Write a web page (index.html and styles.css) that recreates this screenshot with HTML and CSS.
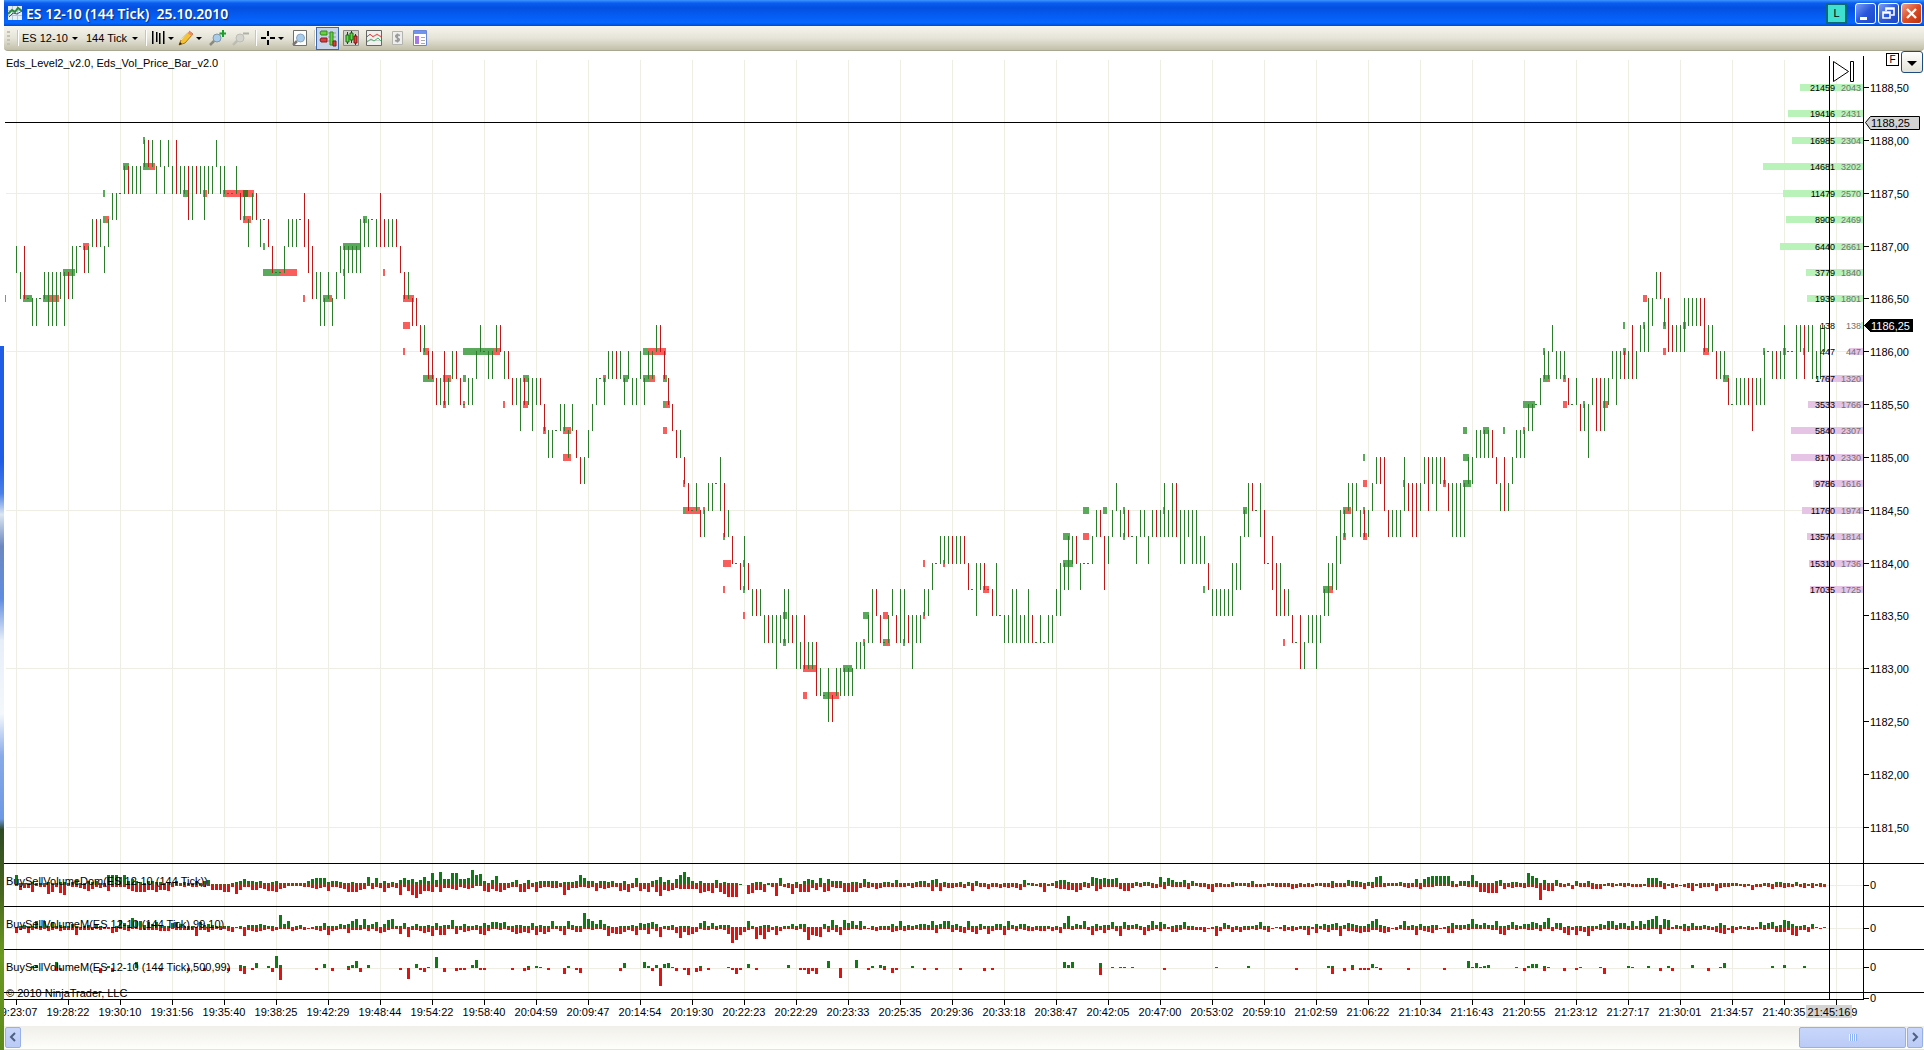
FILE: index.html
```html
<!DOCTYPE html>
<html lang="en">
<head>
    <meta charset="UTF-8">
    <meta name="viewport" content="width=device-width, initial-scale=1.0">
    <title>ES 12-10 (144 Tick) 25.10.2010</title>
    <link rel="stylesheet" href="styles.css">
</head>
<body>
    <div class="desktop"></div>
    <main class="window">
        <header class="titlebar">
            <svg class="title-icon" width="14" height="14" viewBox="0 0 14 14">
                <rect width="14" height="14" fill="#e4eef4"/>
                <path d="M0 4.5h14M0 9.5h14M4.5 0v14M9.5 0v14" stroke="#b4c4d0"/>
                <path d="M0 8l4-4 3 2 3-4 4 3" fill="none" stroke="#2a8a3a" stroke-width="2"/>
                <path d="M1 11l4-4 4 1 5-3" fill="none" stroke="#3050a0"/>
            </svg>
            <h1>ES 12-10 (144 Tick)&nbsp; 25.10.2010</h1>
            <button type="button" class="link-btn">L</button>
            <button type="button" class="win-btn" aria-label="Minimize">
                <svg width="20" height="20"><path d="M4 13h7v3H4z" fill="#fff"/></svg>
            </button>
            <button type="button" class="win-btn" aria-label="Restore">
                <svg width="20" height="20"><path d="M7 7V4h8v7h-3M7 5h8" fill="none" stroke="#fff" stroke-width="1.6"/><path d="M4 8h7v6H4zM4 9h7" fill="none" stroke="#fff" stroke-width="1.6"/></svg>
            </button>
            <button type="button" class="win-btn close" aria-label="Close">
                <svg width="20" height="20"><path d="M5 5l9 9M14 5l-9 9" stroke="#fff" stroke-width="2.4"/></svg>
            </button>
        </header>

        <nav class="toolbar">
            <span class="grip"></span>
            <span class="sep"></span>
            <label class="picker instrument"><select aria-label="Instrument"><option>ES 12-10</option></select><i class="caret"></i></label>
            <label class="picker period"><select aria-label="Period"><option>144 Tick</option></select><i class="caret"></i></label>
            <span class="sep"></span>
            <button type="button" class="tool drop" aria-label="Chart style">
                <svg width="16" height="16"><path d="M2 1h1.500v13H2zM6 2h1.500v10H6zM9 3h1.500v11H9zM13 1h1.500v13H13z"/></svg><i class="caret"></i>
            </button>
            <button type="button" class="tool drop" aria-label="Drawing tools">
                <svg width="16" height="16"><path d="M1 15l2-5 8-9 4 3-8 9z" fill="#f6c233" stroke="#a8761c"/><path d="M11 1l4 3-1.500 2-4-3z" fill="#e88a70"/><path d="M3 10l8-9" stroke="#fff0a0"/><path d="M1 15l1-3 2 2z" fill="#222"/></svg><i class="caret"></i>
            </button>
            <button type="button" class="tool" aria-label="Zoom in">
                <svg width="17" height="16"><path d="M1 15l5-5" stroke="#8a8a80" stroke-width="2.500"/><circle cx="8" cy="8" r="4" fill="#a8cdec" stroke="#8296a8"/><path d="M14 0v7M10.500 3.500h7" stroke="#17a02c" stroke-width="2"/></svg>
            </button>
            <button type="button" class="tool" aria-label="Zoom out">
                <svg width="17" height="16"><path d="M1 15l5-5" stroke="#bdbdb4" stroke-width="2.500"/><circle cx="8" cy="8" r="4" fill="#d4d4ce" stroke="#bdbdb4"/><path d="M11 3.500h6" stroke="#b0b0a8" stroke-width="2"/></svg>
            </button>
            <span class="sep"></span>
            <button type="button" class="tool drop" aria-label="Crosshair">
                <svg width="16" height="16"><path d="M8 1v5M8 10v5M1 8h5M10 8h5" stroke="#000" stroke-width="2"/></svg><i class="caret"></i>
            </button>
            <button type="button" class="tool" aria-label="Zoom window">
                <svg width="16" height="16"><path d="M1.500.5h13v15h-13z" fill="#fff" stroke="#70706c"/><path d="M1 15l4-4" stroke="#777" stroke-width="2.500"/><circle cx="8.500" cy="8" r="4" fill="#a8cdec" stroke="#8aa4bc"/></svg>
            </button>
            <span class="sep"></span>
            <button type="button" class="tool pressed" aria-label="Chart trader">
                <svg width="18" height="18"><path d="M9 4h8M9 8h8M9 12h8" stroke="#999"/><path d="M2 2h6v4H2L1 4zM11 3h3v13h-3z" fill="#6ad03c" stroke="#2c8a1c"/><path d="M2 9h6v4H2l-1-2zM14 12h3v5h-3z" fill="#d84040" stroke="#8c1c1c"/></svg>
            </button>
            <button type="button" class="tool" aria-label="Bars">
                <svg width="16" height="16"><path d="M.5.5h15v15H.5z" fill="#d4d4cc" stroke="#888"/><path d="M4.500 2v12M8.500 1v12M12.500 4v11" stroke="#333"/><path d="M3 5h3v7H3zM7 3h3v7H7z" fill="#58e03c" stroke="#186818"/><path d="M11 6h3v7h-3z" fill="#e84040" stroke="#801010"/></svg>
            </button>
            <button type="button" class="tool" aria-label="Indicators">
                <svg width="16" height="16"><path d="M.5.5h15v15H.5z" fill="#f0f0ee" stroke="#666"/><path d="M1 5.500h14M1 10.500h14" stroke="#ccc"/><path d="M1 7l3-3 3 3 4-3 4 3" fill="none" stroke="#e05050"/><path d="M1 12l4-3 3 2 4-3 3 3" fill="none" stroke="#50b070"/></svg>
            </button>
            <button type="button" class="tool" aria-label="Strategies" disabled>
                <svg width="16" height="16"><path d="M3.500 1.500h10v13h-10z" fill="#eee" stroke="#b4b4ae"/><path d="M11 5.500c-4-2-6 1-2.500 2.500s1.500 4-2.500 2.500M8.500 3.500v9" fill="none" stroke="#999" stroke-width="1.500"/></svg>
            </button>
            <button type="button" class="tool" aria-label="Properties">
                <svg width="16" height="16"><path d="M1.500.5h13v15h-13z" fill="#fff" stroke="#6a86d8"/><path d="M2 1h12v3H2z" fill="#6f93ee"/><path d="M3 6h4v8H3z" fill="#a678e8"/><path d="M9 7.500h4M9 10.500h4M9 13.500h4" stroke="#aaa"/></svg>
            </button>
        </nav>

        <section class="chart">
            <div class="pane price-pane">
                <svg class="plot" id="price"></svg>
                <svg class="axis" id="priceAxis"></svg>
                <p class="pane-label">Eds_Level2_v2.0, Eds_Vol_Price_Bar_v2.0</p>
                <div class="axis-tools">
                    <button type="button" class="fix-btn">F</button>
                    <button type="button" class="more-btn" aria-label="Chart menu"><i class="caret"></i></button>
                </div>
            </div>
            <div class="pane">
                <svg class="plot" id="dom"></svg>
                <svg class="axis"><path d="M0 21.500h5" stroke="#000"/><text x="6" y="25">0</text></svg>
                <p class="pane-label">BuySellVolumeDom(ES 12-10 (144 Tick))</p>
            </div>
            <div class="pane">
                <svg class="plot" id="small"></svg>
                <svg class="axis"><path d="M0 21.500h5" stroke="#000"/><text x="6" y="25">0</text></svg>
                <p class="pane-label">BuySellVolumeM(ES 12-10 (144 Tick),99,10)</p>
            </div>
            <div class="pane">
                <svg class="plot" id="large"></svg>
                <svg class="axis"><path d="M0 17.500h5" stroke="#000"/><text x="6" y="21">0</text></svg>
                <p class="pane-label">BuySellVolumeM(ES 12-10 (144 Tick),500,99)</p>
            </div>
            <div class="pane stub">
                <svg class="plot" id="stub"></svg>
                <svg class="axis"><path d="M0 5.500h5" stroke="#000"/><text x="6" y="9">0</text></svg>
                <p class="pane-label">© 2010 NinjaTrader, LLC</p>
            </div>
            <svg class="times" id="times"></svg>
            <div class="cursor-x"></div>
            <div class="cursor-y"></div>
        </section>

        <footer class="scrollbar">
            <button type="button" class="scroll-btn" aria-label="Scroll left"><svg width="8" height="10"><path d="M6 1L2 5l4 4" fill="none" stroke="#4d6185" stroke-width="2"/></svg></button>
            <div class="track"><div class="thumb"><i></i></div></div>
            <button type="button" class="scroll-btn" aria-label="Scroll right"><svg width="8" height="10"><path d="M2 1l4 4-4 4" fill="none" stroke="#4d6185" stroke-width="2"/></svg></button>
        </footer>
    </main>
    <script src="chart.js"></script>
</body>
</html>
```
FILE: styles.css
```css
* {
    box-sizing: border-box;
}
body {
    margin: 0;
    height: 100vh;
    display: flex;
    overflow: hidden;
    background: #fff;
    font-family: "Liberation Sans", Arial, sans-serif;
    font-size: 11px;
    color: #000;
}
button, select {
    font: inherit;
    color: inherit;
    padding: 0;
    border: 0;
    background: none;
}
h1, p {
    margin: 0;
}
.desktop {
    width: 4px;
    background: linear-gradient(#fff 0 33%, #1f5de6 33% 44%, #4a80e8 47%, #dce6f2 49%, #6c88c0 52%, #5f8ce0 57%, #e6eef8 61%, #f4f8fc 68%, #88aae8 72%, #6c98e4 78%, #2e4a24 79%, #47661e 85%, #6a9a20 91%, #5c8a1c);
}
.window {
    flex: 1;
    min-width: 0;
    display: flex;
    flex-direction: column;
}

/* title bar */
.titlebar {
    height: 26px;
    display: flex;
    align-items: center;
    gap: 2px;
    padding: 0 2px 0 4px;
    background: linear-gradient(#3c94ff 0, #0a5cf0 12%, #0450e0 30%, #0560f8 70%, #0468ff 88%, #0048d0);
}
.titlebar h1 {
    flex: 1;
    margin-left: 2px;
    font-family: "Noto Sans", sans-serif;
    font-size: 14px;
    font-weight: 600;
    color: #fff;
    text-shadow: 1px 1px 1px #0a2a80;
}
.link-btn {
    width: 21px;
    height: 21px;
    margin-right: 6px;
    background: #40e0d0;
    border: 2px solid #0c6a78;
}
.win-btn {
    width: 21px;
    height: 21px;
    border: 1px solid #fff;
    border-radius: 3px;
    background: linear-gradient(135deg, #7ca0f4, #2a58dc 50%, #1c48c8);
}
.win-btn svg {
    display: block;
    width: 19px;
    height: 19px;
}
.win-btn.close {
    background: linear-gradient(135deg, #f0a088, #dc4c24 50%, #b83410);
}

/* toolbar */
.toolbar {
    height: 25px;
    display: flex;
    align-items: center;
    padding-left: 3px;
    background: linear-gradient(#f6f5ee, #e6e4d8 50%, #c2c0a8);
    border-bottom: 1px solid #a9a791;
    border-radius: 0 0 4px 4px;
}
.grip {
    width: 3px;
    height: 14px;
    margin-right: 4px;
    background: repeating-linear-gradient(#c4c2b2 0 2px, transparent 2px 4px);
}
.sep {
    width: 1px;
    height: 16px;
    margin: 0 3px;
    background: #fff;
    border-left: 1px solid #c8c6b6;
    box-sizing: content-box;
}
.picker {
    display: flex;
    align-items: center;
    margin-right: 8px;
}
.picker select {
    appearance: none;
    width: 50px;
}
.picker.period {
    margin-right: 4px;
}
.picker.period select {
    width: 46px;
}
.caret {
    display: inline-block;
    width: 0;
    height: 0;
    border: 3px solid transparent;
    border-top-color: #000;
    border-bottom: 0;
}
.tool {
    display: flex;
    align-items: center;
    justify-content: center;
    width: 23px;
    height: 23px;
}
.tool.drop {
    width: 28px;
    gap: 2px;
    justify-content: flex-start;
}
.tool.pressed {
    background: #c8d4e8;
    border: 1px solid #3c68b0;
    margin-left: -3px;
}

/* chart */
.chart {
    flex: 1;
    min-height: 0;
    display: flex;
    flex-direction: column;
    position: relative;
    background: #fff;
}
.pane {
    display: grid;
    grid-template-columns: 1fr 61px;
    grid-template-rows: 100%;
    flex: none;
    height: 43px;
    position: relative;
    border-top: 1px solid #000;
}
.price-pane {
    flex: 1;
    min-height: 0;
    border-top: 0;
}
.pane.stub {
    height: 7px;
}
.plot, .axis {
    display: block;
    width: 100%;
    height: 100%;
    shape-rendering: crispEdges;
}
.axis {
    overflow: visible;
    border-left: 1px solid #000;
}
.price-pane .axis {
    border-left: 0;
}
.pane-label {
    position: absolute;
    left: 2px;
    top: 10px;
    line-height: 14px;
}
.price-pane .pane-label {
    top: 5px;
}
.stub .pane-label {
    top: -7px;
}
.axis-tools {
    position: absolute;
    right: 1px;
    top: 0;
    display: flex;
    gap: 2px;
}
.fix-btn {
    width: 13px;
    height: 13px;
    margin-top: 2px;
    line-height: 11px;
    font-size: 10px;
    background: #fff;
    border: 1px solid #000;
}
.more-btn {
    width: 22px;
    height: 22px;
    background: linear-gradient(#fff, #e4e2d6);
    border: 1px solid #1c4c80;
    border-radius: 3px;
}
.more-btn .caret {
    border-width: 5px 5px 0;
    vertical-align: middle;
}
.times {
    flex: none;
    height: 27px;
    width: 100%;
    shape-rendering: crispEdges;
}
.cursor-x, .cursor-y {
    position: absolute;
    background: #000;
}
.cursor-x {
    top: 5px;
    bottom: 27px;
    right: 94px;
    width: 1px;
}
.cursor-y {
    left: 1px;
    right: 61px;
    top: 71px;
    height: 1px;
}
.cum, .size {
    font-size: 9px;
    text-anchor: end;
}
.size {
    fill: #707070;
}
.time {
    text-anchor: middle;
}

/* scrollbar */
.scrollbar {
    height: 24px;
    display: flex;
    padding: 1px;
    background: linear-gradient(#f0efea, #fefefa);
    border-bottom: 1px solid #e4e4dc;
}
.scroll-btn, .thumb {
    border: 1px solid #98b0e8;
    border-radius: 2px;
    background: linear-gradient(#c8d6fb, #bacbf6);
}
.scroll-btn {
    width: 16px;
}
.track {
    flex: 1;
    display: flex;
    justify-content: flex-end;
    padding: 0 1px;
}
.thumb {
    width: 107px;
    display: flex;
    align-items: center;
    justify-content: center;
}
.thumb i {
    width: 8px;
    height: 7px;
    background: repeating-linear-gradient(90deg, #eef4fe 0 1px, #8cb0f8 1px 2px);
}
```
FILE: chart.js
```js
// Left and top of the chart area; data below is kept in window pixels
const LEFT = 4, TOP = 51;
const STEP = 4, FIRST = 16, PERIOD = 52;

// One pair per tick bar: high level, low level. a = 1188.50, each letter is a tick (0.25) lower.
// Capitals are down bars.
const bars = `
gh hi GI ii ij ij ii hi hj hj hj hi hj HI gi gh gg GH gh fg FG fg gh fg ef ef
ee de DE de de de cd CD cd de cd de cd de CE de de DF df DE de df de de cd de
de ee ee de EF ef fg ef EF fg ff FG GH hh hh gh fg fg fg ff EG FH GI hi hj ij
hi ij hi gh gi gh gh gh fh fg fg ff fg EG FG fg fg FG GH HI hi IJ IJ JK jk KL
KL LM lm KM lm kl KL LM mm lm lm kl jk kk kl kl jk JK kl KL LM lm ln LM lm ln
lm LM MN no no nn mn mn no mn NO OP op no mn lm ll lm kl kl KL kl lm kl lm lm
kl lm kl kl jk JK KL LM MN NO no OP PQ qq pq QR qr pq pq pp oq PR qr RS ss ST
rt ST tu TU tu uv UV uv uw uv tv tv UV uw vw UW vw vw VX wx xx wy XY wx wx wx
wx wx vw vw vw uv tv TU UV vv uv tu UV tv tv UV uw uv uv tu tu st ss rs rs rs
RS rs rs RS ST tt su st ST tt TU su uu uv uv tv tv uv uv tv UV vv uv vv uv uv
tu su st rt rs RS st ss ss rs qr QR RT rs qr pq qr qr QR rr rs qr qr rs qr QR
qr pr qr pr PR qs qs qr qs qs rs rs ST tu tu tu tu tu su st rt qr pr PQ qq pr
QS ss RT SU su TU tu UV vv UW vw uv uv uw uv tu su st rt qs qr pq pr pq qr QR
qr pq op OP OQ QR qr qr qr oq PQ PR PR pq op OQ op oq op OP PQ pr pr pr pr op
op no no no no NO OP pq OQ pq op no no no mn mn mm lm kl kl jk kl kl kl LM
mm lm MN mn mo lm LN LN ln lm kl km kl KL kl JL kl jk jk ik ij hi HI ij IK JK
jk jk ik ij ij ij IJ IK jk jk KL kl kl LM mm lm lm lm LM LN lm lm km kk kl KL
kl jl kk kk jl jk JL jk jl kl jl jk`.trim().split(/\s+/);

// Volume at price: level -> x, width, colour
const blobs = {
    c: '143,2,g',
    d: '123,6,g 143,6,g 149,6,r',
    e: '103,2,g 183,5,g 203,4,r 223,3,g 226,28,r 243,5,d',
    f: '103,2,g 105,4,r 243,8,r 363,4,g',
    g: '83,6,r 263,2,g 343,17,g',
    h: '63,12,g 263,17,g 280,17,r 343,2,r 383,2,r',
    i: '5,1,r 23,9,g 43,6,g 49,10,r 303,2,r 323,6,g 329,3,r 403,11,r 1643,4,r',
    j: '403,7,r 1623,2,g 1643,2,g 1663,3,g 1683,3,g',
    k: '403,2,r 423,2,g 425,4,r 463,31,g 494,6,r 643,4,g 647,19,r 1543,2,g 1623,3,g 1663,3,r 1703,2,g 1704,5,r 1763,2,g 1783,3,r 1803,2,r',
    l: '423,11,g 443,8,r 463,3,g 523,6,g 603,3,r 623,5,g 643,6,g 649,6,r 663,4,g 1543,4,g 1547,3,r 1563,3,r 1723,6,g',
    m: '443,3,r 463,2,r 503,2,r 523,5,r 663,2,g 665,5,r 1523,12,g 1563,4,r 1583,2,g 1603,2,g 1604,4,r',
    n: '543,3,r 563,8,r 663,4,r 1463,4,g 1483,6,g 1503,2,g 1523,2,r',
    o: '563,8,r 1363,2,g 1463,6,g',
    p: '683,2,r 1363,4,r 1403,2,r 1443,3,r 1463,8,g',
    q: '683,2,g 685,15,r 703,2,r 1083,6,g 1103,4,g 1123,2,g 1163,2,r 1243,4,g 1343,3,g 1346,5,r 1363,2,g',
    r: '723,2,g 1063,7,g 1083,6,r 1123,2,g 1343,3,r 1363,4,r',
    s: '723,8,r 743,2,g 923,2,r 943,2,r 1063,10,g',
    t: '723,2,r 743,2,g 983,6,r 1203,2,g 1323,5,g 1328,5,r',
    u: '743,2,r 783,4,g 863,6,g 883,5,r 923,2,r',
    v: '783,3,g 863,2,r 883,2,g 885,5,r 903,2,g 1283,2,r',
    w: '803,14,r 843,9,g',
    x: '803,4,r 823,6,g 829,10,r'
};

// Level 2: bar start, cumulated size, size; asks down to the last price, then bids
const depth = [
    [1800, 21459, 2043], [1788, 19416, 2431], [1792, 16985, 2304], [1763, 14681, 3202],
    [1783, 11479, 2570], [1786, 8909, 2469], [1780, 6440, 2661], [1806, 3779, 1840],
    [1807, 1939, 1801], [1861, 138, 138], [1849, 447, 447], [1822, 1767, 1320],
    [1808, 3533, 1766], [1791, 5840, 2307], [1791, 8170, 2330], [1813, 9786, 1616],
    [1802, 11760, 1974], [1807, 13574, 1814], [1809, 15310, 1736], [1810, 17035, 1725]
];

// Histograms, one base-36 digit per bar, 13 bars per time label
const domUp = `c332433342344 3462354523ccc ac57543554432 3534325356111 1134575545334 5333333357999
4554334333a28 35242696746a5 f6g77ee778icd 536b222461263 45555524445c9 5535545235138 32356a4637cga
5353326342221 0034413329121 4157639375553 2443743234436 2332455367243 3341425221321 2222162212313
566433342a879 7793222434421 a496446352221 1321142333511 1322222112121 3233522265542 44ab322242327
37abbbbb51555 c533335622443 2eb8263362120 5225211133122 2111198852121 0123122231233 3211101132144 23141213121`;
const domDown = `16449122b83ac 1334575343732 3357888668667 2112132121666 882b633664577 8541111234543
7234589965152 49424c37cgb77 9394456245411 7957864228852 9433443c64433 4374542276842 75838d6764555
55a87a49beee0 0ba66902d124b 4999463973449 9994343542322 2314233372734 4324171325334 3434620113811
4556686241753 3225774121144 2512222511225 8233321112233 2113222543222 1123432212235 1422311112422
5222111123112 3399aaa152432 4224i67713215 1232555113112 1322133235142 1347142217422 1112162313523 43312414123`;
const smallUp = `1242282937342 3531241521112 a64c984757332 6753231745433 3211314445422 1g59124101236
3335458b4b457 15ab326135234 26244a2353242 6477672244326 343383339433i b85a521122343 6567513241233
1169263444111 1831344131235 255111153a41a 6849303133352 9342455494598 4531832532355 3943553122321
316f354913534 4733744521494 7513447321110 1316412133347 3301141312231 5354562465433 58b4210149342
5334401364445 b546448324743 557647c166131 3212325489466 39395abf4ba14 2536334212640 2121211746724 a9522415101`;
const smallDown = `6316212142142 3382322131165 1241132233444 132333a235312 14501a2454214 2111421211343
8431162231414 6521171b32465 a399117254337 8411313576563 9575114813551 12112a6775249 23714b1326c58
7513213127if8 521d9d5384111 315f9ab152582 2112112433254 3432132226111 5256257217423 9214134434414
2611311139436 214a121139431 4115521222251 1a41153522121 2510143421281 612522a144565 5225651312328
3456311661312 1111133782131 1221411412683 845a412131211 2313131171211 1442331335672 6211231131155 528a2351010`;

// Large trades: bar index, up, down
const largeTrades = [
    [4, 3, 0], [5, 4, 0], [10, 7, 4], [11, 0, 3], [21, 0, 6], [23, 3, 0], [24, 0, 5], [30, 7, 0], [36, 0, 4],
    [43, 0, 4], [47, 0, 4], [53, 0, 4], [56, 4, 4], [57, 2, 7], [59, 0, 3], [60, 6, 0], [63, 2, 0], [64, 0, 5],
    [65, 14, 0], [66, 4, 15], [75, 0, 3], [77, 5, 0], [79, 0, 4], [83, 3, 2], [84, 4, 0], [85, 8, 0], [86, 0, 5],
    [88, 4, 0], [96, 0, 2], [98, 0, 13], [100, 5, 0], [101, 0, 2], [102, 0, 5], [103, 1, 0], [105, 13, 0],
    [107, 0, 5], [110, 0, 4], [111, 0, 3], [112, 0, 3], [114, 4, 0], [115, 10, 0], [116, 0, 3], [117, 0, 3],
    [124, 0, 2], [127, 0, 4], [128, 3, 3], [130, 3, 0], [131, 1, 0], [133, 0, 3], [137, 0, 7], [138, 3, 0],
    [140, 0, 2], [141, 0, 6], [151, 0, 4], [152, 6, 0], [157, 7, 0], [158, 2, 0], [159, 0, 4], [160, 4, 0],
    [161, 0, 22], [162, 5, 0], [163, 6, 0], [164, 1, 0], [165, 0, 4], [167, 0, 2], [168, 0, 8], [170, 0, 5],
    [171, 2, 4], [173, 0, 2], [178, 1, 0], [179, 0, 3], [180, 0, 7], [181, 0, 3], [183, 5, 0], [185, 0, 2],
    [193, 4, 0], [196, 0, 3], [197, 0, 3], [198, 0, 7], [199, 0, 4], [200, 0, 7], [203, 9, 0], [206, 0, 12],
    [210, 10, 0], [213, 0, 2], [214, 2, 0], [216, 4, 0], [217, 3, 3], [219, 0, 6], [220, 0, 3], [224, 2, 0],
    [227, 0, 2], [230, 0, 2], [236, 0, 2], [242, 0, 4], [244, 0, 3], [262, 7, 0], [263, 4, 0], [264, 7, 0],
    [271, 6, 8], [274, 1, 0], [276, 1, 0], [277, 1, 0], [279, 1, 0], [287, 0, 2], [300, 1, 0], [308, 3, 0],
    [320, 0, 2], [328, 2, 0], [329, 2, 7], [332, 0, 4], [334, 4, 3], [336, 0, 2], [337, 0, 2], [338, 0, 2],
    [339, 5, 0], [340, 1, 0], [341, 0, 3], [348, 0, 3], [357, 0, 3], [363, 9, 0], [364, 1, 0], [365, 6, 0],
    [366, 1, 0], [367, 2, 0], [368, 4, 0], [375, 1, 0], [377, 0, 4], [378, 2, 0], [379, 5, 0], [380, 5, 0],
    [382, 3, 4], [383, 1, 0], [387, 0, 4], [390, 0, 3], [391, 1, 0], [396, 1, 0], [397, 0, 7], [403, 2, 0],
    [404, 1, 0], [408, 3, 0], [411, 0, 4], [413, 2, 0], [414, 0, 4], [419, 4, 0], [423, 0, 4], [426, 1, 0],
    [427, 6, 0], [439, 2, 0], [442, 4, 0], [447, 2, 0]
];

const times = `19:23:07 19:28:22 19:30:10 19:31:56 19:35:40 19:38:25 19:42:29 19:48:44 19:54:22 19:58:40
20:04:59 20:09:47 20:14:54 20:19:30 20:22:23 20:22:29 20:23:33 20:25:35 20:29:36 20:33:18 20:38:47 20:42:05
20:47:00 20:53:02 20:59:10 21:02:59 21:06:22 21:10:34 21:16:43 21:20:55 21:23:12 21:27:17 21:30:01 21:34:57
21:40:35 21:44:59`.split(/\s+/);

const colors = { g: '#5aaa5c', r: '#f95e5c', d: '#4a7020' };

function rect(x, y, w, h, fill) {
    return `<rect x="${x}" y="${y}" width="${w}" height="${h}" fill="${fill}"/>`;
}
function levelY(level) {
    return Math.round(87 + level * 26.42) - TOP;
}
function verticalGrid(top) {
    return times.map((t, k) => rect(FIRST + k * PERIOD - LEFT, top, 1, 900, '#eeeee4')).join('');
}

function drawPrice() {
    let out = verticalGrid(9);
    for (let level = 4; level < 30; level += 6) {
        out += rect(2, levelY(level), 1857, 1, '#eeeee4');
    }
    depth.forEach(([x, sum, size], level) => {
        const y = levelY(level);
        out += rect(x - LEFT, y - 3, 1863 - x, 7, level < 10 ? '#b9f3b9' : '#e6c4e6');
    });
    Object.keys(blobs).forEach(key => {
        const y = levelY(key.charCodeAt(0) - 97) - 3;
        blobs[key].split(' ').forEach(item => {
            const [x, w, c] = item.split(',');
            out += rect(x - LEFT, y, w, 7, colors[c]);
        });
    });
    bars.forEach((bar, i) => {
        const low = bar.toLowerCase();
        const color = bar === low ? '#2c7c2c' : '#c01818';
        const y1 = levelY(low.charCodeAt(0) - 97);
        const y2 = levelY(low.charCodeAt(1) - 97);
        const x = FIRST + i * STEP - LEFT;
        out += y1 === y2 ? rect(x - 1, y1, 2, 1, color) : rect(x, y1, 1, y2 - y1 + 1, color);
    });
    depth.forEach(([x, sum, size], level) => {
        const y = levelY(level) + 4;
        out += `<text class="cum" x="${1835 - LEFT}" y="${y}">${sum}</text>`;
        out += `<text class="size" x="${1861 - LEFT}" y="${y}">${size}</text>`;
    });
    // jump-to-last marker
    out += '<path d="M1829.500 10.500v20l15-10zM1846.500 10.500h3v20h-3z" fill="#fff" stroke="#000" shape-rendering="auto"/>';
    document.getElementById('price').innerHTML = out;
}

function drawPriceAxis() {
    let out = rect(0, 5, 1, 900, '#000');
    for (let k = 0; k < 15; k++) {
        const y = levelY(k * 2);
        const price = (1188.5 - k * 0.5).toFixed(2).replace('.', ',');
        out += rect(1, y, 5, 1, '#000') + `<text x="7" y="${y + 5}">${price}</text>`;
    }
    out += '<path d="M2.500 71.500l5-6h49v13h-49z" fill="#d3d3d3" stroke="#000" shape-rendering="auto"/><text x="8" y="76">1188,25</text>';
    const y = levelY(9);
    out += `<path d="M1 ${y}l6-6h43v13h-43z"/><text x="8" y="${y + 5}" fill="#fff">1186,25</text>`;
    document.getElementById('priceAxis').innerHTML = out;
}

function digits(chunks) {
    return chunks.replace(/\s/g, '').split('').map(c => parseInt(c, 36));
}
function drawHistogram(id, up, down, zero, overlap) {
    let out = verticalGrid(0) + rect(2, zero, 1857, 1, '#eeeee4');
    for (let i = 0; i < up.length; i++) {
        const x = FIRST + i * STEP - LEFT - 1;
        const u = Math.round(up[i] * 0.83), d = Math.round(down[i] * 0.83);
        if (u) out += rect(x, zero - u, 3, u, '#107a14');
        if (d) out += rect(x, zero, 3, d, '#e01212');
        if (u && d && overlap) out += rect(x, zero - 1, 3, 2, '#7c4812');
    }
    document.getElementById(id).innerHTML = out;
}

function drawTimes() {
    let out = rect(0, 0, 1860, 1, '#000');
    times.forEach((t, k) => {
        const x = FIRST + k * PERIOD - LEFT;
        out += rect(x, 0, 1, 6, '#000') + `<text class="time" x="${x}" y="17">${t}</text>`;
    });
    out += rect(1806 - LEFT, 6, 46, 13, '#d3d3d3') + `<text class="time" x="${1829 - LEFT}" y="17">21:45:16</text>`;
    document.getElementById('times').innerHTML = out;
}

const largeUp = new Array(453).fill(0), largeDown = new Array(453).fill(0);
largeTrades.forEach(([i, u, d]) => {
    largeUp[i] = u;
    largeDown[i] = d;
});

drawPrice();
drawPriceAxis();
drawHistogram('dom', digits(domUp), digits(domDown), 21, true);
drawHistogram('small', digits(smallUp), digits(smallDown), 21, false);
drawHistogram('large', largeUp, largeDown, 18, false);
document.getElementById('stub').innerHTML = verticalGrid(0);
drawTimes();
```
